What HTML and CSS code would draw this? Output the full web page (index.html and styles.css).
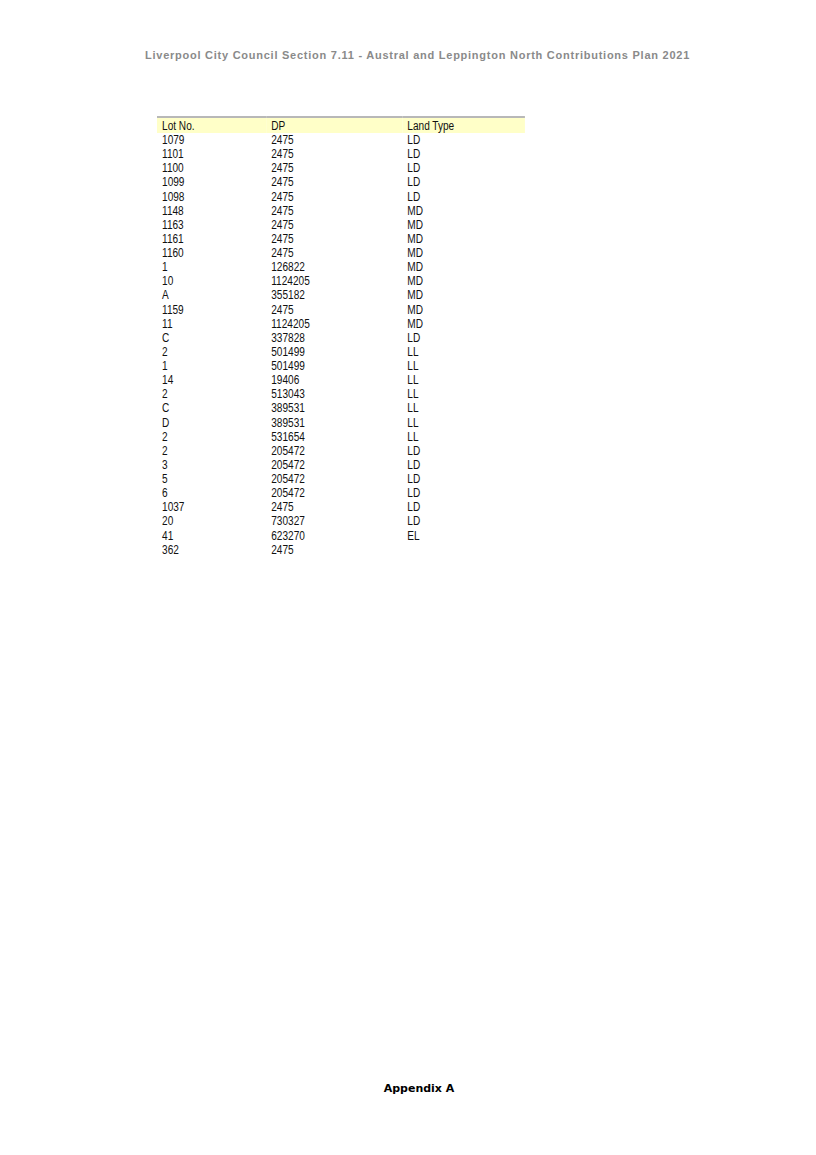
FILE: index.html
```html
<!DOCTYPE html>
<html>
<head>
<meta charset="utf-8">
<link rel="stylesheet" href="styles.css">
</head>
<body>
<div class="page">
  <header class="running-head">Liverpool City Council Section 7.11 - Austral and Leppington North Contributions Plan 2021</header>
  <div class="table-wrap">
  <table class="lots">
    <thead>
      <tr><th>Lot No.</th><th>DP</th><th>Land Type</th></tr>
    </thead>
    <tbody>
      <tr><td>1079</td><td>2475</td><td>LD</td></tr>
      <tr><td>1101</td><td>2475</td><td>LD</td></tr>
      <tr><td>1100</td><td>2475</td><td>LD</td></tr>
      <tr><td>1099</td><td>2475</td><td>LD</td></tr>
      <tr><td>1098</td><td>2475</td><td>LD</td></tr>
      <tr><td>1148</td><td>2475</td><td>MD</td></tr>
      <tr><td>1163</td><td>2475</td><td>MD</td></tr>
      <tr><td>1161</td><td>2475</td><td>MD</td></tr>
      <tr><td>1160</td><td>2475</td><td>MD</td></tr>
      <tr><td>1</td><td>126822</td><td>MD</td></tr>
      <tr><td>10</td><td>1124205</td><td>MD</td></tr>
      <tr><td>A</td><td>355182</td><td>MD</td></tr>
      <tr><td>1159</td><td>2475</td><td>MD</td></tr>
      <tr><td>11</td><td>1124205</td><td>MD</td></tr>
      <tr><td>C</td><td>337828</td><td>LD</td></tr>
      <tr><td>2</td><td>501499</td><td>LL</td></tr>
      <tr><td>1</td><td>501499</td><td>LL</td></tr>
      <tr><td>14</td><td>19406</td><td>LL</td></tr>
      <tr><td>2</td><td>513043</td><td>LL</td></tr>
      <tr><td>C</td><td>389531</td><td>LL</td></tr>
      <tr><td>D</td><td>389531</td><td>LL</td></tr>
      <tr><td>2</td><td>531654</td><td>LL</td></tr>
      <tr><td>2</td><td>205472</td><td>LD</td></tr>
      <tr><td>3</td><td>205472</td><td>LD</td></tr>
      <tr><td>5</td><td>205472</td><td>LD</td></tr>
      <tr><td>6</td><td>205472</td><td>LD</td></tr>
      <tr><td>1037</td><td>2475</td><td>LD</td></tr>
      <tr><td>20</td><td>730327</td><td>LD</td></tr>
      <tr><td>41</td><td>623270</td><td>EL</td></tr>
      <tr><td>362</td><td>2475</td><td></td></tr>
    </tbody>
  </table>
  </div>
  <footer class="running-foot">Appendix A</footer>
</div>
</body>
</html>
```
FILE: styles.css
```css
html, body {
  margin: 0;
  padding: 0;
  background: #ffffff;
}
.page {
  width: 816px;
  height: 1155px;
  display: flex;
  flex-direction: column;
  align-items: center;
  font-family: "Liberation Sans", Arial, sans-serif;
}
.running-head {
  margin-top: 48px;
  font-size: 11px;
  font-weight: bold;
  color: #8a8a8a;
  letter-spacing: 0.75px;
  line-height: 14px;
  padding-left: 19px;
}
.table-wrap {
  align-self: flex-start;
  margin-top: 54px;
  margin-left: 157px;
  width: 368px;
}
.lots {
  width: 438px;
  transform: scaleX(0.84);
  transform-origin: left top;
  border-collapse: collapse;
  font-size: 12px;
  color: #111;
}
.lots th, .lots td {
  text-align: left;
  font-weight: normal;
  padding: 0 0 0 6px;
  height: 14.14px;
  line-height: 14px;
  white-space: nowrap;
}
.lots thead tr {
  background: #ffffc8;
  border-top: 2px solid #b8b8b8;
}
.lots th { height: 14px; padding-top: 1px; }
.lots th:nth-child(1), .lots td:nth-child(1) { width: 124px; }
.lots th:nth-child(2), .lots td:nth-child(2) { width: 156px; }
.running-foot {
  margin-top: auto;
  margin-bottom: 60px;
  font-size: 11px;
  font-weight: 900;
  font-family: "DejaVu Sans", "Liberation Sans", sans-serif;
  color: #000;
  padding-left: 22px;
}
```
